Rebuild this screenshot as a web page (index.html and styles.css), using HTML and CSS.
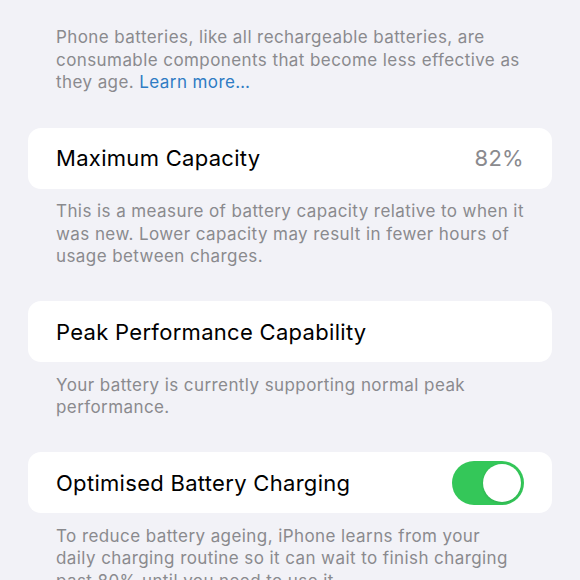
FILE: index.html
```html
<!DOCTYPE html>
<html>
<head>
<meta charset="utf-8">
<link rel="stylesheet" href="styles.css">
</head>
<body>
<div class="page">
  <p class="note first">Phone batteries, like all rechargeable batteries, are consumable components that become less effective as they age. <span class="link">Learn more…</span></p>

  <div class="card">
    <span class="label">Maximum Capacity</span>
    <span class="value">82%</span>
  </div>
  <p class="note">This is a measure of battery capacity relative to when it was new. Lower capacity may result in fewer hours of usage between charges.</p>

  <div class="card">
    <span class="label">Peak Performance Capability</span>
  </div>
  <p class="note">Your battery is currently supporting normal peak performance.</p>

  <div class="card">
    <span class="label">Optimised Battery Charging</span>
    <span class="toggle"><span class="knob"></span></span>
  </div>
  <p class="note">To reduce battery ageing, iPhone learns from your daily charging routine so it can wait to finish charging past 80% until you need to use it.</p>
</div>
</body>
</html>
```

FILE: styles.css
```css
html, body {
  margin: 0;
  padding: 0;
  background: #f2f2f7;
  height: 100%;
  overflow: hidden;
}
body {
  font-family: Inter, "Noto Sans", "Liberation Sans", sans-serif;
  -webkit-font-smoothing: antialiased;
}
.page {
  padding: 0 28px;
  display: flex;
  flex-direction: column;
}
.note {
  margin: 11.5px 0 33.5px;
  padding: 0 28px 0 28px;
  font-size: 17px;
  line-height: 22.5px;
  color: #8a8a8e;
  letter-spacing: 0.42px;
}
.note.first {
  margin-top: 26px;
  margin-bottom: 34px;
}
.link {
  color: #2f7cc4;
}
.card {
  background: #ffffff;
  border-radius: 13px;
  height: 61px;
  padding: 0 28px;
  display: flex;
  align-items: center;
  justify-content: space-between;
}
.label {
  font-size: 22px;
  color: #000;
  letter-spacing: 0.3px;
}
.value {
  font-size: 22px;
  color: #8a8a8e;
  letter-spacing: 0.3px;
}
.toggle {
  width: 72px;
  height: 44px;
  border-radius: 22px;
  background: #34c759;
  position: relative;
  flex: none;
}
.knob {
  position: absolute;
  right: 3px;
  top: 3px;
  width: 38px;
  height: 38px;
  border-radius: 50%;
  background: #fff;
  box-shadow: 0 1px 3px rgba(0,0,0,0.12);
}
```
